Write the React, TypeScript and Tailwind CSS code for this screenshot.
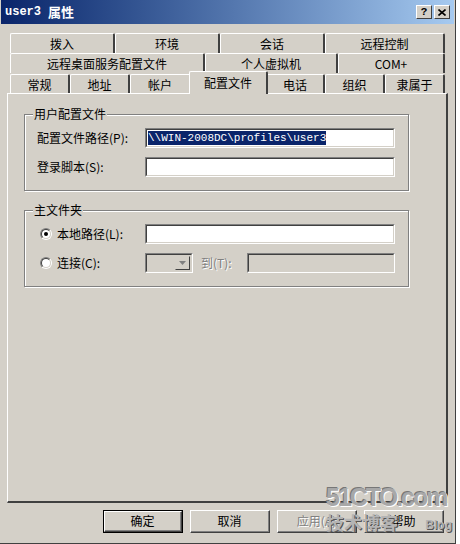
const ui = { fontFamily: '"Noto Sans CJK SC", "Liberation Sans", sans-serif' };
const mono = { fontFamily: '"Liberation Mono", "Noto Sans CJK SC", monospace' };

function Tab({ label, w, selected = false }: { label: string; w: number; selected?: boolean }) {
  if (selected) {
    return (
      <div
        className="relative z-10 -mt-[3px] -mx-[2px] h-[23px] border-t border-l border-white border-r-2 border-r-[#404040] bg-[#d4d0c8] rounded-t-[2px] flex items-center justify-center text-[12px] text-black"
        style={{ width: w + 4 }}
      >
        {label}
      </div>
    );
  }
  return (
    <div
      className="h-[20px] border-t border-l border-white border-r-2 border-r-[#404040] rounded-t-[2px] flex items-center justify-center text-[12px] text-black"
      style={{ width: w }}
    >
      {label}
    </div>
  );
}

function Sunken({ w, disabled = false, children }: { w: number; disabled?: boolean; children?: React.ReactNode }) {
  return (
    <div className="border border-t-[#808080] border-l-[#808080] border-b-white border-r-white" style={{ width: w }}>
      <div
        className={`h-[18px] border border-t-[#404040] border-l-[#404040] border-b-[#d4d0c8] border-r-[#d4d0c8] flex items-center px-[1px] ${disabled ? "bg-[#d4d0c8]" : "bg-white"}`}
      >
        {children}
      </div>
    </div>
  );
}

function Group({ title, children }: { title: string; children: React.ReactNode }) {
  return (
    <div className="relative w-[385px] border border-[#808080] shadow-[inset_1px_1px_0_#fff,1px_1px_0_#fff]">
      <span className="absolute -top-[9px] left-[8px] bg-[#d4d0c8] px-[1px] text-[12px] leading-[16px] text-black">{title}</span>
      {children}
    </div>
  );
}

function Radio({ checked }: { checked?: boolean }) {
  return (
    <div className="w-[12px] h-[12px] rounded-full border border-t-[#808080] border-l-[#808080] border-b-white border-r-white flex items-center justify-center">
      <div className="w-[10px] h-[10px] rounded-full bg-white border border-t-[#404040] border-l-[#404040] border-b-[#d4d0c8] border-r-[#d4d0c8] flex items-center justify-center">
        {checked && <div className="w-[4px] h-[4px] rounded-full bg-black" />}
      </div>
    </div>
  );
}

function Button({ label, isDefault = false, disabled = false }: { label: string; isDefault?: boolean; disabled?: boolean }) {
  return (
    <div className={`w-[80px] h-[23px] ${isDefault ? "border border-black" : ""}`}>
      <div className="h-full border border-t-white border-l-white border-b-[#404040] border-r-[#404040]">
        <div
          className={`h-full border-r border-b border-[#808080] flex items-center justify-center text-[12px] ${
            disabled ? "text-[#808080] [text-shadow:1px_1px_0_#fff]" : "text-black"
          }`}
        >
          {label}
        </div>
      </div>
    </div>
  );
}

export default function App() {
  return (
    <div className="relative w-[460px] h-[544px] bg-white overflow-hidden" style={ui}>
      <div className="w-[456px] h-[544px] bg-[#d4d0c8] border-r border-b border-[#404040] flex flex-col">
        {/* Title bar */}
        <div className="h-[24px] mx-[1px] mt-0 bg-gradient-to-r from-[#0a246a] to-[#a6caf0] flex items-center pl-[4px] pr-[4px]">
          <span className="text-white text-[12px] font-bold" style={mono}>user3</span>
          <span className="text-white text-[13px] font-bold ml-[7px]">属性</span>
          <div className="ml-auto flex gap-[2px]">
            <div className="w-[16px] h-[14px] bg-[#d4d0c8] border border-t-white border-l-white border-b-[#404040] border-r-[#404040] flex items-center justify-center text-[11px] font-bold leading-none text-black" style={mono}>?</div>
            <div className="w-[16px] h-[14px] bg-[#d4d0c8] border border-t-white border-l-white border-b-[#404040] border-r-[#404040] flex items-center justify-center">
              <svg width="8" height="7" viewBox="0 0 8 7">
                <path d="M0.5 0.5 L7.5 6.5 M7.5 0.5 L0.5 6.5" stroke="#000" strokeWidth="1.6" />
              </svg>
            </div>
          </div>
        </div>

        {/* Tabs */}
        <div className="pl-[10px] mt-[9px] flex flex-col">
          <div className="flex">
            <Tab label="拨入" w={105} />
            <Tab label="环境" w={105} />
            <Tab label="会话" w={105} />
            <Tab label="远程控制" w={120} />
          </div>
          <div className="flex">
            <Tab label="远程桌面服务配置文件" w={195} />
            <Tab label="个人虚拟机" w={133} />
            <Tab label="COM+" w={107} />
          </div>
          <div className="flex mt-[1px]">
            <Tab label="常规" w={60} />
            <Tab label="地址" w={60} />
            <Tab label="帐户" w={61} />
            <Tab label="配置文件" w={75} selected />
            <Tab label="电话" w={59} />
            <Tab label="组织" w={60} />
            <Tab label="隶属于" w={60} />
          </div>
        </div>

        {/* Panel */}
        <div className="ml-[7px] w-[441px] h-[410px] -mt-[1px] border-t border-l border-white border-r-2 border-b-2 border-r-[#404040] border-b-[#404040] pt-[20px] pl-[16px] flex flex-col gap-[19px]">
          <Group title="用户配置文件">
            <div className="pt-[13px] pb-[13px] pl-[12px] flex flex-col gap-[9px]">
              <div className="flex items-center">
                <span className="w-[108px] text-[12px] text-black">配置文件路径(P):</span>
                <Sunken w={250}>
                  <span className="bg-[#0a246a] text-white text-[11px] leading-[14px]" style={mono}>\\WIN-2008DC\profiles\user3</span>
                </Sunken>
              </div>
              <div className="flex items-center">
                <span className="w-[108px] text-[12px] text-black">登录脚本(S):</span>
                <Sunken w={250} />
              </div>
            </div>
          </Group>
          <Group title="主文件夹">
            <div className="pt-[13px] pb-[13px] pl-[15px] flex flex-col gap-[9px]">
              <div className="flex items-center">
                <Radio checked />
                <span className="ml-[5px] w-[88px] text-[12px] text-black">本地路径(L):</span>
                <Sunken w={250} />
              </div>
              <div className="flex items-center">
                <Radio />
                <span className="ml-[5px] w-[88px] text-[12px] text-black">连接(C):</span>
                <Sunken w={48} disabled>
                  <div className="ml-auto w-[15px] h-[14px] border border-t-[#d4d0c8] border-l-[#d4d0c8] border-b-[#404040] border-r-[#404040] bg-[#d4d0c8] flex items-center justify-center">
                    <svg width="7" height="4" viewBox="0 0 7 4"><path d="M0 0 H7 L3.5 4 Z" fill="#808080" /></svg>
                  </div>
                </Sunken>
                <span className="ml-[8px] w-[46px] text-[12px] text-[#808080] [text-shadow:1px_1px_0_#fff]">到(T):</span>
                <Sunken w={148} disabled />
              </div>
            </div>
          </Group>
        </div>

        {/* Buttons */}
        <div className="mt-[7px] ml-[103px] flex gap-[7px]">
          <Button label="确定" isDefault />
          <Button label="取消" />
          <Button label="应用(A)" disabled />
          <Button label="帮助" />
        </div>
      </div>

      {/* Watermark */}
      <div className="absolute left-[326px] top-[483px] w-[126px] flex flex-col pointer-events-none">
        <span className="whitespace-nowrap text-[25px] font-bold leading-[28px] tracking-[-2px] text-[#a8a8a8] [text-shadow:1px_1px_0_#fff,-1px_-1px_0_#777]" style={{ fontFamily: '"Liberation Sans", sans-serif' }}>
          51CTO.com
        </span>
        <div className="flex items-end justify-between">
          <span className="text-[18px] font-bold leading-[22px] text-[#b4b4b4] [text-shadow:1px_1px_0_#555]">技术博客</span>
          <span className="text-[12px] font-bold leading-[16px] text-[#b4b4b4] [text-shadow:1px_1px_0_#555]" style={{ fontFamily: '"Liberation Sans", sans-serif' }}>Blog</span>
        </div>
      </div>
    </div>
  );
}
